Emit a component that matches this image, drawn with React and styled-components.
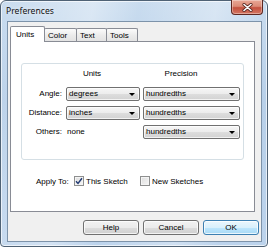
import React from "react";
import styled, { createGlobalStyle } from "styled-components";

const Global = createGlobalStyle`
  html, body { margin: 0; padding: 0; background: #ffffff; }
  body { width: 268px; height: 247px; overflow: hidden; }
  * { box-sizing: border-box; }
`;

const Window = styled.div`
  width: 268px;
  height: 247px;
  border: 1px solid #4f6275;
  border-radius: 6px 6px 4px 4px;
  background:
    linear-gradient(100deg, rgba(255,255,255,0) 0%, rgba(255,255,255,0.35) 30%, rgba(255,255,255,0) 45%, rgba(255,255,255,0.3) 70%, rgba(255,255,255,0) 85%),
    linear-gradient(to bottom, #c9dcef 0%, #b8d0e9 40%, #bcd3ec 100%);
  box-shadow: inset 0 0 0 1px rgba(255,255,255,0.65);
  display: flex;
  flex-direction: column;
  font-family: "Liberation Sans", Arial, sans-serif;
  font-size: 8px;
  color: #000;
`;

const TitleBar = styled.div`
  height: 20px;
  display: flex;
  align-items: flex-start;
  justify-content: space-between;
  padding-left: 5px;
  padding-right: 4px;
`;

const Title = styled.div`
  font-family: "Noto Sans", sans-serif;
  font-size: 8.6px;
  line-height: 20px;
  color: #111;
  text-shadow: 0 0 4px rgba(255,255,255,0.9);
`;

const Close = styled.div`
  width: 32px;
  height: 15px;
  margin-top: -1px;
  border: 1px solid #5e2720;
  border-top: none;
  border-radius: 0 0 4px 4px;
  background: linear-gradient(to bottom, #e9a896 0%, #dc8b77 45%, #c4513e 55%, #d47662 100%);
  box-shadow: inset 0 0 0 1px rgba(255,255,255,0.35);
  display: flex;
  align-items: center;
  justify-content: center;
`;

const Client = styled.div`
  flex: 1;
  margin: 0 5px 4px 6px;
  border: 1px solid #7d93aa;
  background: #f0f0f0;
  display: flex;
  flex-direction: column;
  padding: 4px 5px 0 2px;
`;

const TabStrip = styled.div`
  height: 15px;
  display: flex;
  align-items: flex-end;
  position: relative;
  z-index: 1;
`;

const Tab = styled.div`
  width: ${p => p.$w}px;
  height: ${p => (p.$active ? 16 : 13)}px;
  margin-left: ${p => (p.$first ? 0 : -1)}px;
  margin-bottom: ${p => (p.$active ? -1 : 0)}px;
  border: 1px solid #898c95;
  border-bottom: none;
  border-radius: 2px 2px 0 0;
  background: ${p => (p.$active ? "#ffffff" : "linear-gradient(to bottom, #fbfbfb 0%, #ececec 50%, #e3e3e3 100%)")};
  position: relative;
  z-index: ${p => (p.$active ? 2 : 1)};
  padding-left: ${p => (p.$active ? 5 : 3)}px;
  padding-top: ${p => (p.$active ? 3 : 2)}px;
  line-height: 10px;
  white-space: nowrap;
`;

const Panel = styled.div`
  width: 245px;
  height: 171px;
  border: 1px solid #898c95;
  background: #ffffff;
  padding: 21px 10px 0 10px;
  display: flex;
  flex-direction: column;
`;

const Group = styled.div`
  height: 97px;
  border: 1px solid #d5dfe5;
  border-radius: 3px;
  padding: 4px 0 0 0;
  display: grid;
  grid-template-columns: 41px 74px 97px;
  column-gap: 3px;
  row-gap: 5px;
  grid-auto-rows: 14px;
  align-items: center;
`;

const Head = styled.div`
  grid-column: ${p => p.$col};
  text-align: center;
  padding-right: ${p => p.$shift}px;
  line-height: 10px;
  align-self: start;
  height: 15px;
  padding-top: 1px;
`;

const Label = styled.div`
  text-align: right;
  padding-right: 1px;
  white-space: nowrap;
  line-height: 14px;
`;

const Plain = styled.div`
  padding-left: 1px;
  line-height: 14px;
`;

const Combo = styled.div`
  height: 14px;
  border: 1px solid #707070;
  border-radius: 2px;
  background: linear-gradient(to bottom, #f6f6f6 0%, #ececec 50%, #dddddd 51%, #d2d2d2 100%);
  box-shadow: inset 0 0 0 1px rgba(255,255,255,0.7);
  display: flex;
  align-items: center;
  justify-content: space-between;
  padding: 0 4px 0 2px;
  line-height: 12px;
`;

const Arrow = styled.span`
  width: 0;
  height: 0;
  border-left: 3px solid transparent;
  border-right: 3px solid transparent;
  border-top: 3px solid #000;
`;

const ApplyRow = styled.div`
  margin-top: 15px;
  padding-left: 15px;
  display: flex;
  align-items: center;
  height: 12px;
`;

const ApplyLabel = styled.div`
  width: 38px;
  white-space: nowrap;
`;

const Option = styled.div`
  width: ${p => p.$w}px;
  display: flex;
  align-items: center;
  gap: 2px;
  white-space: nowrap;
`;

const Box = styled.span`
  width: 10px;
  height: 10px;
  border: 1px solid #8e8f8f;
  background: linear-gradient(135deg, #dcdcdc 0%, #f7f7f7 100%);
  box-shadow: inset 0 0 0 1px #f4f4f4;
  display: flex;
  align-items: center;
  justify-content: center;
  flex: none;
`;

const Buttons = styled.div`
  display: flex;
  justify-content: flex-end;
  gap: 4px;
  margin-top: 8px;
  margin-right: -3px;
`;

const Button = styled.div`
  width: 56px;
  height: 15px;
  border: 1px solid ${p => (p.$default ? "#3c7fb1" : "#707070")};
  border-radius: 3px;
  background: ${p =>
    p.$default
      ? "linear-gradient(to bottom, #eaf6fd 0%, #d9f0fc 50%, #bee6fd 51%, #a7d9f5 100%)"
      : "linear-gradient(to bottom, #f2f2f2 0%, #ebebeb 50%, #dddddd 51%, #cfcfcf 100%)"};
  box-shadow: inset 0 0 0 1px rgba(255,255,255,0.75);
  display: flex;
  align-items: center;
  justify-content: center;
  line-height: 12px;
`;

function Check() {
  return (
    <svg width="8" height="8" viewBox="0 0 8 8">
      <path d="M1 4.2 L3 6.4 L7 1.2" fill="none" stroke="#213a73" strokeWidth="1.4" />
    </svg>
  );
}

function Dropdown({ children }) {
  return (
    <Combo>
      <span>{children}</span>
      <Arrow />
    </Combo>
  );
}

export default function App() {
  return (
    <>
      <Global />
      <Window>
        <TitleBar>
          <Title>Preferences</Title>
          <Close>
            <svg width="11" height="9" viewBox="0 0 11 9">
              <path d="M2 1.5 L9 7.5 M9 1.5 L2 7.5" stroke="#5a2a24" strokeWidth="3.2" strokeLinecap="round" />
              <path d="M2 1.5 L9 7.5 M9 1.5 L2 7.5" stroke="#ffffff" strokeWidth="1.6" strokeLinecap="round" />
            </svg>
          </Close>
        </TitleBar>
        <Client>
          <TabStrip>
            <Tab $first $active $w={35}>Units</Tab>
            <Tab $w={33}>Color</Tab>
            <Tab $w={31}>Text</Tab>
            <Tab $w={32}>Tools</Tab>
          </TabStrip>
          <Panel>
            <Group>
              <span />
              <Head $col={2} $shift={22}>Units</Head>
              <Head $col={3} $shift={21}>Precision</Head>
              <Label>Angle:</Label>
              <Dropdown>degrees</Dropdown>
              <Dropdown>hundredths</Dropdown>
              <Label>Distance:</Label>
              <Dropdown>inches</Dropdown>
              <Dropdown>hundredths</Dropdown>
              <Label>Others:</Label>
              <Plain>none</Plain>
              <Dropdown>hundredths</Dropdown>
            </Group>
            <ApplyRow>
              <ApplyLabel>Apply To:</ApplyLabel>
              <Option $w={66}>
                <Box><Check /></Box>
                This Sketch
              </Option>
              <Option $w={80}>
                <Box />
                New Sketches
              </Option>
            </ApplyRow>
          </Panel>
          <Buttons>
            <Button>Help</Button>
            <Button>Cancel</Button>
            <Button $default>OK</Button>
          </Buttons>
        </Client>
      </Window>
    </>
  );
}
